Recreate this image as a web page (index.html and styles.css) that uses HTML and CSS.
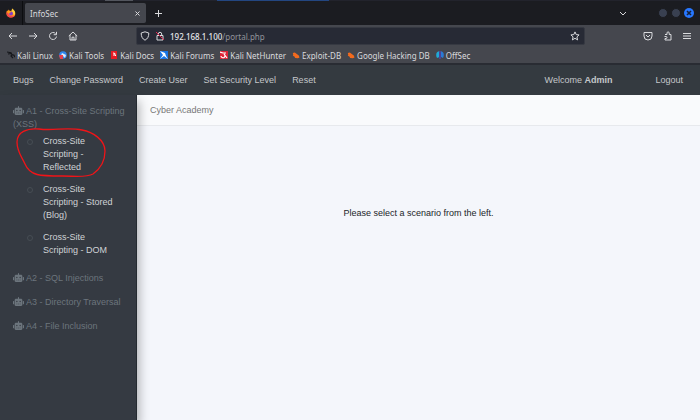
FILE: index.html
```html
<!DOCTYPE html>
<html lang="en">
<head>
<meta charset="utf-8">
<title>InfoSec</title>
<link rel="stylesheet" href="styles.css">
</head>
<body>
<svg class="defs" aria-hidden="true">
  <symbol id="robot" viewBox="0 0 640 512"><path fill="currentColor" fill-rule="evenodd" d="M32 224h32v192H32c-18 0-32-14-32-32V256c0-18 14-32 32-32zM544 176v272c0 35-29 64-64 64H160c-35 0-64-29-64-64V176c0-44 36-80 80-80h112V32c0-18 14-32 32-32s32 14 32 32v64h112c44 0 80 36 80 80zM264 256a40 40 0 1 0-80 0 40 40 0 0 0 80 0zM256 384h-64v32h64zM352 384h-64v32h64zM456 256a40 40 0 1 0-80 0 40 40 0 0 0 80 0zM448 384h-64v32h64zM640 256v128c0 18-14 32-32 32h-32V224h32c18 0 32 14 32 32z"/></symbol>
  <symbol id="bug" viewBox="0 0 10 10"><path fill="#f36a1d" d="M1 2.500l2.500-.6 2.500 1.800 2.500 2 .9 2.300-2 1-3.400-.3-1-1.700-2-1 .6-1z"/></symbol>
</svg>

<header class="browser">
  <div class="edge"><span class="edge-grey"></span><span class="edge-blue"></span></div>
  <div class="tabs">
    <button class="fox" aria-label="Firefox View">
      <svg width="10" height="10" viewBox="0 0 20 20"><path fill="#ff8a16" d="M2 5l2 1 1-3 3 3 4-1V1l4 4c5 5 3 14-6 14C1 19-1 11 2 5z"/><path fill="#ffd33d" d="M12 1c5 3 7 7 6 11-1 3-3 4-3 1 0-3-3-3-4-6z"/><path fill="#f43a57" d="M1 9c0 6 4 10 9 10 4 0 7-2 8-5-4 4-13 4-14-4z"/><circle cx="10" cy="11" r="4" fill="#8240c8"/><path fill="#ff9b1b" d="M3 6c3-1 4 1 8 1-1 3-4 1-4 4-3-1-4-3-4-5z"/></svg>
    </button>
    <div class="tab"><span>InfoSec</span>
      <button aria-label="Close tab"><svg width="5" height="5" viewBox="0 0 5 5" class="line"><path d="M.5.5l4 4M4.500.5l-4 4"/></svg></button>
    </div>
    <button class="new" aria-label="New tab"><svg width="7" height="7" viewBox="0 0 7 7" class="line"><path d="M3.500 0v7M0 3.500h7"/></svg></button>
    <div class="window">
      <button class="list" aria-label="List tabs"><svg width="8" height="5" viewBox="0 0 8 5" class="line"><path d="M1 1l3 3 3-3"/></svg></button>
      <button class="dot" aria-label="Minimize"></button>
      <button class="dot" aria-label="Maximize"></button>
      <button class="dot close" aria-label="Close"><svg width="10" height="10" viewBox="0 0 10 10"><path d="M3 3l4 4M7 3L3 7" stroke="#14203a" stroke-width="1.600"/></svg></button>
    </div>
  </div>

  <div class="toolbar">
    <div class="history">
      <button aria-label="Back"><svg width="10" height="10" viewBox="0 0 10 10" class="line"><path d="M9 5H1M4 2L1 5l3 3"/></svg></button>
      <button aria-label="Forward"><svg width="10" height="10" viewBox="0 0 10 10" class="line"><path d="M1 5h8M6 2l3 3-3 3"/></svg></button>
      <button aria-label="Reload"><svg width="10" height="10" viewBox="0 0 10 10" class="line"><path d="M8.500 5.500A3.500 3.500 0 1 1 7.500 2.500M8.500.8v2.900H5.700"/></svg></button>
      <button aria-label="Home"><svg width="10" height="10" viewBox="0 0 10 10" class="line"><path d="M.8 5L5 1l4.200 4M2 4v5h6V4M4 9V6.200h2V9"/></svg></button>
    </div>
    <div class="url">
      <svg width="10" height="10" viewBox="0 0 10 10" class="line"><path d="M5 .8l3.800 1.200C8.900 5.500 7.500 8 5 9.200 2.500 8 1.100 5.500 1.200 2z"/></svg>
      <svg width="10" height="10" viewBox="0 0 10 10" class="line"><path d="M2 4.500h6V9H2zM3.300 4.500V3a1.700 1.700 0 0 1 3.400 0v1.500"/><path d="M1 1l8 8" stroke="#e22850"/></svg>
      <span class="address" role="textbox" tabindex="0" aria-label="Address"><b>192.168.1.100</b>/portal.php</span>
      <button aria-label="Bookmark this page"><svg width="10" height="10" viewBox="0 0 10 10" class="line"><path d="M5 .9l1.200 2.700 2.900.3-2.200 2 .7 3L5 7.300 2.400 8.900l.7-3-2.200-2 2.900-.3z"/></svg></button>
    </div>
    <div class="tools">
      <button aria-label="Pocket"><svg width="10" height="10" viewBox="0 0 10 10" class="line"><path d="M1 1.500h8V5a4 4 0 0 1-8 0zM3 4l2 2 2-2"/></svg></button>
      <button aria-label="Extensions"><svg width="10" height="10" viewBox="0 0 10 10" class="line"><path d="M2 3.500h2V2a1 1 0 0 1 2.200 0v1.500H8V9H2V7.500h1a1 1 0 0 0 0-2H1.500"/></svg></button>
      <button aria-label="Menu"><svg width="8" height="10" viewBox="0 0 8 10" class="line"><path d="M0 2.500h8M0 5h8M0 7.500h8"/></svg></button>
    </div>
  </div>

  <nav class="bookmarks" aria-label="Bookmarks">
    <a href="#"><svg width="8" height="8" viewBox="0 0 8 8"><path d="M0 1l4 .7 1 2 2 .5.8 2M1 3l3-.5M5 4l-1 1 2 2" fill="none" stroke="#15171b" stroke-width="1.200"/></svg>Kali Linux</a>
    <a href="#"><svg width="8" height="8" viewBox="0 0 8 8"><circle cx="4" cy="4" r="3.800" fill="#2f86ee"/><path d="M3 2l4 2-1 3-2-2-3 2z" fill="#dce9fa"/><path d="M0 4h4v4H1z" fill="#e5434f"/></svg>Kali Tools</a>
    <a href="#"><svg width="8" height="8" viewBox="0 0 8 8"><path d="M1 0h6v8H1z" fill="#e51c24"/><path d="M3 2l2 .5v1.500l1 1M3 4h2" fill="none" stroke="#fff"/></svg>Kali Docs</a>
    <a href="#"><svg width="8" height="8" viewBox="0 0 8 8"><path d="M0 0h8v8H0z" fill="#1976e6"/><path d="M0 0l5 2 1 3 2 3-4-3-4 3 3-4z" fill="#fff"/></svg>Kali Forums</a>
    <a href="#"><svg width="8" height="8" viewBox="0 0 8 8"><path d="M0 0h8v8H0z" fill="#df2638"/><path d="M0 1l3 1h3M1 5a2 2 0 1 0 3-2l3 4" fill="none" stroke="#fff" stroke-width="1.200"/></svg>Kali NetHunter</a>
    <a href="#"><svg width="8" height="8"><use href="#bug"/></svg>Exploit-DB</a>
    <a href="#"><svg width="8" height="8"><use href="#bug"/></svg>Google Hacking DB</a>
    <a href="#"><svg width="8" height="8" viewBox="0 0 8 8"><path d="M3 .3v6L1 7C-.5 4 0 1 3 .3z" fill="#20a9d8"/><path d="M3.500 0h1v8h-1z" fill="#5540dc"/><path d="M5 .3C8 1 8.500 4 7 7L5 6z" fill="#297bd6"/></svg>OffSec</a>
  </nav>
</header>

<nav class="menu" aria-label="Main">
  <a href="#">Bugs</a><a href="#">Change Password</a><a href="#">Create User</a><a href="#">Set Security Level</a><a href="#">Reset</a>
  <span class="welcome">Welcome <b>Admin</b></span>
  <a href="#">Logout</a>
</nav>

<div class="page">
  <aside class="sidebar">
    <section>
      <h2><svg class="robot"><use href="#robot"/></svg> A1 - Cross-Site Scripting (XSS)</h2>
      <ul>
        <li><a href="#">Cross-Site Scripting - Reflected</a>
          <svg class="mark" viewBox="0 0 92 52" aria-hidden="true"><path d="M24 2C12 1 2 5 2 15c0 10 5 15 8 22 5 12 15 12 37 12 12 0 24 2 31-2 7-5 12-13 12-23C90 13 78 5 67 3 52 0 38 4 24 2z"/></svg>
        </li>
        <li><a href="#">Cross-Site Scripting - Stored (Blog)</a></li>
        <li><a href="#">Cross-Site Scripting - DOM</a></li>
      </ul>
    </section>
    <h2><svg class="robot"><use href="#robot"/></svg> A2 - SQL Injections</h2>
    <h2><svg class="robot"><use href="#robot"/></svg> A3 - Directory Traversal</h2>
    <h2><svg class="robot"><use href="#robot"/></svg> A4 - File Inclusion</h2>
  </aside>
  <main>
    <h1>Cyber Academy</h1>
    <p>Please select a scenario from the left.</p>
  </main>
</div>
</body>
</html>
```
FILE: styles.css
```css
* { box-sizing: border-box; }
body {
  margin: 0;
  min-height: 100vh;
  display: flex;
  flex-direction: column;
  background: #f4f6fb;
  font: 9px/13px "Liberation Sans", Arial, sans-serif;
}
a { color: inherit; text-decoration: none; }
button {
  display: flex;
  align-items: center;
  justify-content: center;
  padding: 0;
  border: 0;
  background: none;
  color: inherit;
}
svg { flex: none; }
.defs { position: absolute; width: 0; height: 0; }
.line { fill: none; stroke: currentColor; stroke-width: 1; stroke-linejoin: round; }

/* Browser frame */
.browser {
  background: #45474e;
  color: #d9dadd;
  font-family: "Noto Sans", sans-serif;
  font-size: 8px;
  border-bottom: 2px solid #292c33;
}
.edge { display: flex; height: 1px; background: #22232c; }
.edge-grey { width: 4%; margin-left: 15%; background: #53565e; }
.edge-blue { width: 16%; margin-left: 12%; background: #234681; }
.tabs { display: flex; align-items: center; height: 24px; background: #1b1c21; }
.fox { width: 23px; height: 24px; border-right: 1px solid #0c0d10; }
.tab {
  display: flex;
  align-items: center;
  justify-content: space-between;
  width: 121px;
  height: 20px;
  margin-left: 2px;
  padding: 0 6px 0 5px;
  border-radius: 2px;
  background: #45474e;
}
.new { margin-left: 9px; }
.window { display: flex; align-items: center; gap: 3px; margin-left: auto; padding-right: 6px; }
.list { margin-right: 28px; }
.dot { width: 10px; height: 10px; border: 1px solid #1b1c21; border-radius: 50%; background: #394051; }
.close { border: 0; background: #2777ff; }
.toolbar { display: flex; align-items: center; height: 22px; padding: 0 9px 0 8px; }
.history { display: flex; gap: 10px; width: 128px; }
.url {
  display: flex;
  align-items: center;
  gap: 5px;
  flex: 1;
  height: 18px;
  padding: 0 4px 0 3px;
  border: 1px solid #363942;
  border-radius: 2px;
  background: #272a35;
}
.address { flex: 1; color: #92949b; }
.address b { color: #e6e7ea; font-weight: 500; }
.tools { display: flex; gap: 10px; margin-left: 58px; }
.bookmarks { display: flex; gap: 6px; height: 16px; padding: 0 7px; align-items: center; }
.bookmarks a { display: flex; align-items: center; gap: 2px; white-space: nowrap; }

/* Site */
.menu {
  display: flex;
  align-items: center;
  gap: 16px;
  height: 30px;
  padding: 0 17px 0 13px;
  background: #343a40;
  color: #c4c7ca;
}
.welcome { margin: 0 27px 0 auto; }
.page { display: flex; flex: 1; }
.sidebar {
  position: relative;
  z-index: 1;
  width: 137px;
  padding: 10px 12px;
  background: #353a42;
  border-right: 1px solid #252b31;
  box-shadow: 2px 6px 10px rgba(0, 0, 0, .3);
}
h2 { margin: 0 -8px 11px 0; padding-left: 1px; font-size: 9px; font-weight: 400; line-height: 13px; color: #6c757d; }
section { margin-bottom: 15px; }
section h2 { margin-bottom: 4px; }
.robot { width: 11px; height: 9px; vertical-align: -1px; }
ul { display: flex; flex-direction: column; gap: 9px; margin: 0; padding: 0 10px 0 31px; list-style: none; }
li { position: relative; color: #d0d3d6; }
li::before {
  content: "";
  position: absolute;
  top: 4px;
  left: -16px;
  width: 4px;
  height: 4px;
  border: 1px solid #464d54;
  border-radius: 50%;
}
.mark { position: absolute; top: -8px; left: -28px; width: 92px; height: 52px; fill: none; stroke: #f01418; stroke-width: 1.3; pointer-events: none; }
main { flex: 1; }
h1 {
  margin: 0;
  padding: 9px 13px 8px;
  border-bottom: 1px solid #e7e9ed;
  background: #f9fafc;
  color: #777;
  font-size: 9px;
  font-weight: 400;
}
p { margin: 81px 0 0; text-align: center; color: #212529; }
```
